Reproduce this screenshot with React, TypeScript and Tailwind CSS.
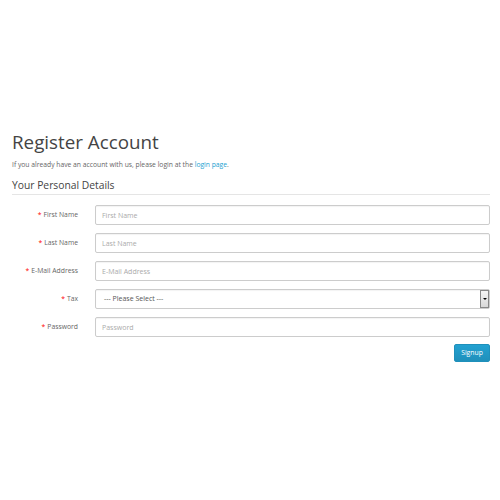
import React from 'react';

const fields = [
  { label: 'First Name', type: 'text' },
  { label: 'Last Name', type: 'text' },
  { label: 'E-Mail Address', type: 'email' },
  { label: 'Tax', type: 'select' },
  { label: 'Password', type: 'password' },
];

export default function App() {
  return (
    <div className="w-[500px] h-[500px] bg-white text-[#666] overflow-hidden" style={{ fontFamily: '"Open Sans", sans-serif' }}>
      <div className="pl-[12px] pr-[10px] pt-[131px]">
        <h1 className="text-[18.8px] leading-[22px] text-[#444] font-normal">Register Account</h1>
        <p className="text-[6.75px] leading-[10px] mt-[7px]">
          If you already have an account with us, please login at the <span className="text-[#23a1d1]">login page</span>.
        </p>
        <h2 className="text-[10.3px] leading-[14px] text-[#444] mt-[8px] pb-[2px] border-b border-[#e5e5e5]">Your Personal Details</h2>

        <form className="flex flex-col gap-[8px] mt-[10px]">
          {fields.map((f) => (
            <div key={f.label} className="flex items-center gap-[17px]">
              <label className="w-[66px] shrink-0 text-right text-[6.8px] leading-[10px] text-[#666]">
                <span className="text-[#f00] mr-[2px]">*</span>
                {f.label}
              </label>
              {f.type === 'select' ? (
                <div className="relative flex-1 h-[20px]">
                  <div className="h-full border border-[#ccc] rounded-[2px] pl-[8px] flex items-center text-[7px] text-[#555] shadow-[inset_0_1px_1px_rgba(0,0,0,0.05)]">
                    --- Please Select ---
                  </div>
                  <div className="absolute right-[1px] top-[1px] bottom-[1px] w-[9px] border border-[#888] bg-gradient-to-b from-[#f4f4f4] to-[#d8d8d8] flex items-center justify-center">
                    <div className="w-0 h-0 border-l-[2px] border-r-[2px] border-t-[2px] border-l-transparent border-r-transparent border-t-black" />
                  </div>
                </div>
              ) : (
                <input
                  type={f.type}
                  placeholder={f.label}
                  className="flex-1 h-[20px] border border-[#ccc] rounded-[2px] px-[6px] text-[7px] text-[#555] placeholder:text-[#aaa] outline-none shadow-[inset_0_1px_1px_rgba(0,0,0,0.05)]"
                />
              )}
            </div>
          ))}
        </form>

        <div className="flex justify-end mt-[7px]">
          <button className="w-[36px] h-[18px] rounded-[2px] bg-gradient-to-b from-[#23a1d1] to-[#1f90bb] border border-[#1f90bb] text-white text-[6.8px]">
            Signup
          </button>
        </div>
      </div>
    </div>
  );
}
